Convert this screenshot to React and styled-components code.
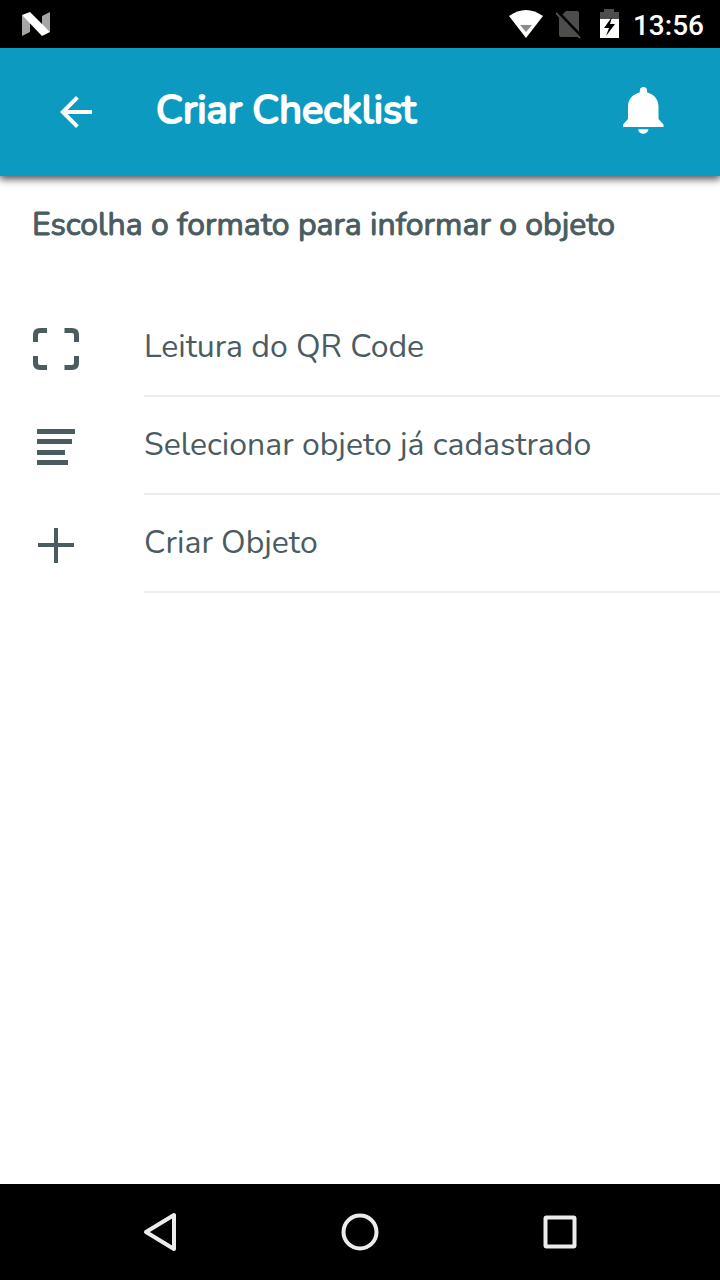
/* eslint-disable react/prop-types */
import React, { Component } from 'react';
import styled, { createGlobalStyle } from 'styled-components';

const GlobalStyle = createGlobalStyle`
  * {
    box-sizing: border-box;
  }
  body {
    margin: 0;
    background: #ffffff;
    font-family: Nunito, Lato, sans-serif;
  }
`;

const Screen = styled.div`
  display: flex;
  flex-direction: column;
  min-height: 100vh;
`;

const StatusBar = styled.div`
  display: flex;
  align-items: center;
  gap: 12px;
  height: 48px;
  padding: 0 16px 0 20px;
  background: #000000;
`;

const Spacer = styled.div`
  flex: 1;
`;

const Clock = styled.time`
  padding-top: 3px;
  color: #ffffff;
  font-family: Roboto, sans-serif;
  font-size: 28px;
  font-weight: 500;
  line-height: 32px;
`;

const AppBar = styled.header`
  display: flex;
  align-items: center;
  height: 128px;
  padding: 0 48px;
  background: #0d9ac0;
  color: #ffffff;
  box-shadow: 0 2px 8px 1px rgba(0, 0, 0, 0.7);
`;

const IconButton = styled.button`
  display: flex;
  align-items: center;
  justify-content: center;
  width: 56px;
  height: 56px;
  padding: 0;
  border: 0;
  background: none;
  color: inherit;
`;

const Title = styled.h1`
  flex: 1;
  margin: 0;
  padding: 0 0 4px 52px;
  font-size: 40px;
  font-weight: 400;
  line-height: 48px;
  -webkit-text-stroke: 2px currentColor;
`;

const Content = styled.main`
  flex: 1;
  color: #4a5c5f;
`;

const SubTitle = styled.h2`
  margin: 0;
  padding: 28px 32px 0;
  font-size: 32px;
  font-weight: 400;
  line-height: 42px;
  -webkit-text-stroke: 1px currentColor;
`;

const OptionList = styled.ul`
  margin: 53px 0 0;
  padding: 0;
  list-style: none;
`;

const OptionButton = styled.button`
  display: flex;
  align-items: center;
  gap: 64px;
  width: 100%;
  padding: 0 0 0 32px;
  border: 0;
  background: none;
  color: inherit;
  font-family: inherit;
  text-align: left;
`;

const OptionLabel = styled.span`
  flex: 1;
  padding: 28px 0;
  border-bottom: 2px solid #ececec;
  font-size: 32px;
  line-height: 40px;
`;

const NavigationBar = styled.nav`
  display: flex;
  justify-content: center;
  gap: 144px;
  padding: 20px 0;
  background: #000000;
  color: #ececec;
`;

const AndroidLogo = () => (
  <svg width="32" height="32" viewBox="0 0 32 32" aria-hidden="true">
    <path d="M2 7l8 5v12l-8 4z" fill="#a5a5a5" />
    <path d="M22 8l8-4v20l-8-7z" fill="#a5a5a5" />
    <path d="M2 7l8-3 20 20-8 4z" fill="#ffffff" />
  </svg>
);

const WifiIcon = () => (
  <svg width="36" height="32" viewBox="0 0 36 32" aria-hidden="true">
    <path d="M1 8Q18-4 35 8L18 30z" fill="#ffffff" />
    <path d="M12 17h12l-6 7z" fill="#8c8c8c" />
  </svg>
);

const NoSimIcon = () => (
  <svg width="28" height="32" viewBox="0 0 28 32" aria-hidden="true">
    <path d="M10 3h11a2 2 0 0 1 2 2v22a2 2 0 0 1-2 2H5a2 2 0 0 1-2-2V10z" fill="#4d4d4d" />
    <path d="M2 4l25 26" stroke="#000000" strokeWidth="3" />
    <path d="M0 5l24 25" stroke="#4d4d4d" strokeWidth="2" />
  </svg>
);

const BatteryIcon = () => (
  <svg width="25" height="32" viewBox="0 0 25 32" aria-hidden="true">
    <path d="M8 1h10v3h5v7H4V4h4z" fill="#4d4d4d" />
    <path d="M4 11h19v19H4z" fill="#ffffff" />
    <path d="M16 9L8 20h5l-3 8 9-12h-5z" fill="#000000" />
  </svg>
);

const BackIcon = () => (
  <svg width="48" height="48" viewBox="0 0 24 24" fill="currentColor" aria-hidden="true">
    <path d="M20 11H7.83l5.59-5.59L12 4l-8 8 8 8 1.41-1.41L7.83 13H20z" />
  </svg>
);

const BellIcon = () => (
  <svg width="56" height="56" viewBox="1 0 56 56" fill="currentColor" aria-hidden="true">
    <path d="M28.500 3c-2.200 0-3.700 1.500-3.700 3.500v2C17.500 10.200 13 15.500 13 22.500V35l-5 5.500V43h40.500v-2.500l-5-5.500V22.500c0-7-4.300-12.300-11.400-14v-2C32.100 4.500 30.700 3 28.500 3z" />
    <path d="M23 45.200h10.500c-.5 2.800-2.500 4.500-5.300 4.500S23.500 48 23 45.200z" />
  </svg>
);

const ScanIcon = () => (
  <svg width="48" height="48" viewBox="0 0 48 48" fill="none" stroke="currentColor" strokeWidth="5" aria-hidden="true">
    <path d="M3.500 18v-7q0-4.500 4.500-4.500h7M32.500 6.500h7.500q4.500 0 4.500 4.500v7M44.500 32v7q0 4.500-4.500 4.500h-7.500M15 43.500H8q-4.500 0-4.500-4.500v-7" />
  </svg>
);

const TextIcon = () => (
  <svg width="48" height="48" viewBox="0 0 48 48" fill="currentColor" aria-hidden="true">
    <path d="M5 7h38v5H5zM5 17h35v5H5zM5 28h28v5H5zM5 38h31v5H5z" />
  </svg>
);

const AddIcon = () => (
  <svg width="48" height="48" viewBox="0 0 48 48" fill="currentColor" aria-hidden="true">
    <path d="M22 8h4v15h16v4H26v16h-4V27H6v-4h16z" />
  </svg>
);

const options = [
  { id: 'qr', label: 'Leitura do QR Code', icon: ScanIcon },
  { id: 'select', label: 'Selecionar objeto já cadastrado', icon: TextIcon },
  { id: 'create', label: 'Criar Objeto', icon: AddIcon },
];

const Option = ({ option, onSelect }) => {
  const Icon = option.icon;
  return (
    <li>
      <OptionButton type="button" onClick={() => onSelect(option.id)}>
        <Icon />
        <OptionLabel>{option.label}</OptionLabel>
      </OptionButton>
    </li>
  );
};

class CreateChecklist extends Component {
  constructor(props) {
    super(props);
    this.state = {
      selected: '',
    };
    this.handleSelect = this.handleSelect.bind(this);
  }

  handleSelect(id) {
    this.setState({ selected: id });
  }

  render() {
    return (
      <Screen data-selected={this.state.selected}>
        <GlobalStyle />
        <StatusBar>
          <AndroidLogo />
          <Spacer />
          <WifiIcon />
          <NoSimIcon />
          <BatteryIcon />
          <Clock>13:56</Clock>
        </StatusBar>
        <AppBar>
          <IconButton type="button" aria-label="Voltar"><BackIcon /></IconButton>
          <Title>Criar Checklist</Title>
          <IconButton type="button" aria-label="Notificações"><BellIcon /></IconButton>
        </AppBar>
        <Content>
          <SubTitle>Escolha o formato para informar o objeto</SubTitle>
          <OptionList>
            {options.map((option) => (
              <Option key={option.id} option={option} onSelect={this.handleSelect} />
            ))}
          </OptionList>
        </Content>
        <NavigationBar>
          <IconButton type="button" aria-label="Anterior">
            <svg width="56" height="56" viewBox="0 0 56 56" fill="none" stroke="currentColor" strokeWidth="4" strokeLinejoin="round">
              <path d="M42 11v34L14 28z" />
            </svg>
          </IconButton>
          <IconButton type="button" aria-label="Início">
            <svg width="56" height="56" viewBox="0 0 56 56" fill="none" stroke="currentColor" strokeWidth="4">
              <circle cx="28" cy="28" r="16.500" />
            </svg>
          </IconButton>
          <IconButton type="button" aria-label="Recentes">
            <svg width="56" height="56" viewBox="0 0 56 56" fill="none" stroke="currentColor" strokeWidth="4">
              <rect x="13.500" y="13.500" width="29" height="29" rx="1" />
            </svg>
          </IconButton>
        </NavigationBar>
      </Screen>
    );
  }
}

export default CreateChecklist;
